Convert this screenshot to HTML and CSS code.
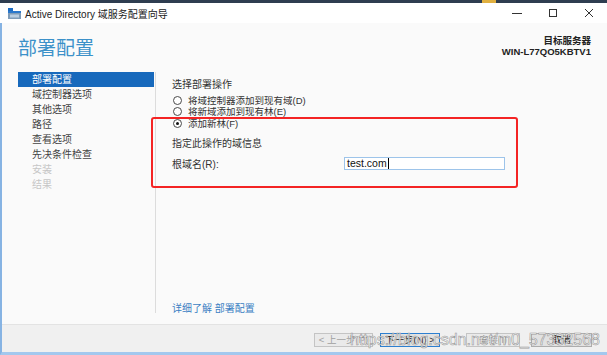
FILE: index.html
```html
<!DOCTYPE html>
<html lang="zh-CN">
	<head>
		<meta charset="UTF-8">
		<meta name="viewport" content="width=device-width, initial-scale=1.0">
		<title>Active Directory 域服务配置向导</title>
		<link rel="stylesheet" href="styles.css">
	</head>
	<body>
		<div class="screen">
			<div class="taskstrip"><span class="taskmark"></span></div>

			<div class="titlebar">
				<svg class="app-icon" width="14" height="11" viewBox="0 0 14 11">
					<rect x="0" y="0" width="5" height="3" fill="#1c6cc4"/>
					<rect x="0" y="3" width="13" height="2" fill="#2a78cc"/>
					<rect x="0" y="5" width="13" height="6" fill="#7d9bb8"/>
					<rect x="2" y="6.5" width="9" height="3" fill="#b9cde0"/>
				</svg>
				<span class="title">Active Directory 域服务配置向导</span>
				<div class="controls">
					<span class="ctl">
						<svg width="10" height="10" viewBox="0 0 10 10"><path d="M0 5.5h10" stroke="#333" stroke-width="1"/></svg>
					</span>
					<span class="ctl">
						<svg width="10" height="10" viewBox="0 0 10 10"><rect x="1.5" y="1.5" width="7" height="7" fill="none" stroke="#333" stroke-width="1"/></svg>
					</span>
					<span class="ctl">
						<svg width="10" height="10" viewBox="0 0 10 10"><path d="M1 1l8 8M9 1l-8 8" stroke="#333" stroke-width="1"/></svg>
					</span>
				</div>
			</div>

			<div class="frame">
				<div class="main">
					<div class="header">
						<h1>部署配置</h1>
						<div class="target">
							<div>目标服务器</div>
							<div class="host">WIN-L77QO5KBTV1</div>
						</div>
					</div>

					<div class="body">
						<ul class="steps">
							<li class="active">部署配置</li>
							<li>域控制器选项</li>
							<li>其他选项</li>
							<li>路径</li>
							<li>查看选项</li>
							<li>先决条件检查</li>
							<li class="disabled">安装</li>
							<li class="disabled">结果</li>
						</ul>
						<div class="divider"></div>

						<div class="pane">
							<div class="caption">选择部署操作</div>
							<div class="radios">
								<div class="radio"><span class="dot"></span>将域控制器添加到现有域(D)</div>
								<div class="radio"><span class="dot"></span>将新域添加到现有林(E)</div>
								<div class="radio checked"><span class="dot"></span>添加新林(F)</div>
							</div>

							<div class="caption section">指定此操作的域信息</div>
							<div class="field">
								<span class="field-label">根域名(R):</span>
								<div class="textbox">test.com<span class="caret"></span></div>
							</div>

							<a class="more" href="#">详细了解 部署配置</a>
						</div>
					</div>
				</div>

				<div class="footer">
					<button class="btn" disabled>&lt; 上一步(P)</button>
					<button class="btn default">下一步(N) &gt;</button>
					<button class="btn install" disabled>安装(I)</button>
					<button class="btn cancel">取消</button>
				</div>
			</div>

			<div class="mark-box"></div>
			<div class="watermark">https://blog.csdn.net/m0_57332568</div>
		</div>
	</body>
</html>
```

FILE: styles.css
```css
body {
    margin: 0;
    background-color: #fafafa;
    font-family: "Liberation Sans", "Noto Sans CJK SC", sans-serif;
    font-size: 10px;
    color: #333333;
}

.screen {
    position: relative;
    width: 607px;
    height: 355px;
    overflow: hidden;
}

.taskstrip {
    height: 3px;
    background-color: #2e3d50;
    display: flex;
}

.taskmark {
    width: 14px;
    margin-left: 482px;
    background-color: #e0b040;
}

/* title bar */

.titlebar {
    height: 20px;
    background-color: #ffffff;
    display: flex;
    align-items: center;
}

.app-icon {
    margin-left: 8px;
    margin-right: 3px;
}

.title {
    color: #222222;
    font-size: 10px;
}

.controls {
    margin-left: auto;
    display: flex;
    height: 100%;
}

.ctl {
    width: 36px;
    display: flex;
    align-items: center;
    justify-content: center;
}

/* window frame */

.frame {
    height: 329px;
    border-left: 2px solid #86b3e3;
    border-bottom: 3px solid #a3c8ee;
    display: flex;
    flex-direction: column;
}

.main {
    flex: 1;
    min-height: 0;
    background-color: #fafafa;
    padding: 13px 16px 0 16px;
    display: flex;
    flex-direction: column;
}

.header {
    display: flex;
    justify-content: space-between;
    align-items: flex-start;
}

h1 {
    margin: 0;
    font-size: 19px;
    line-height: 22px;
    font-weight: normal;
    color: #3c91c9;
    font-family: "Noto Sans CJK SC", sans-serif;
}

.target {
    text-align: right;
    font-weight: bold;
    font-size: 9.5px;
    line-height: 10.5px;
    color: #222222;
}

.body {
    flex: 1;
    min-height: 0;
    margin-top: 14px;
    padding-bottom: 9px;
    display: flex;
}

/* step list */

.steps {
    list-style: none;
    margin: 0;
    padding: 0;
    width: 136px;
}

.steps li {
    height: 15px;
    line-height: 15px;
    padding-left: 14px;
    color: #444444;
}

.steps li.active {
    background-color: #1769bc;
    color: #ffffff;
}

.steps li.disabled {
    color: #c6c6c6;
}

.divider {
    width: 1px;
    margin-left: 1px;
    margin-bottom: 2px;
    background-color: #dcdcdc;
}

/* right pane */

.pane {
    flex: 1;
    padding-left: 16px;
    display: flex;
    flex-direction: column;
}

.caption {
    margin-top: 7px;
    line-height: 12px;
    color: #333333;
}

.caption.section {
    margin-top: 9px;
}

.radios {
    margin-top: 4px;
}

.radio {
    height: 11.3px;
    line-height: 11px;
    font-size: 9.5px;
    display: flex;
    align-items: center;
    color: #333333;
}

.dot {
    width: 7px;
    height: 7px;
    border: 1px solid #4a4a4a;
    border-radius: 50%;
    margin-left: 1px;
    margin-right: 6px;
    display: flex;
    align-items: center;
    justify-content: center;
    background-color: #ffffff;
}

.radio.checked .dot::after {
    content: "";
    width: 3px;
    height: 3px;
    border-radius: 50%;
    background-color: #111111;
}

.field {
    margin-top: 6px;
    display: flex;
    align-items: center;
}

.field-label {
    width: 172px;
}

.textbox {
    width: 155px;
    height: 11px;
    line-height: 11px;
    border: 1px solid #9dc4ea;
    background-color: #ffffff;
    padding: 0 2px;
    font-size: 10.5px;
    color: #111111;
    display: flex;
    align-items: center;
}

.caret {
    width: 1px;
    height: 11px;
    margin-left: 1px;
    background-color: #000000;
}

.more {
    margin-top: auto;
    line-height: 12px;
    color: #3b7fc3;
    text-decoration: none;
}

/* footer buttons */

.footer {
    height: 28px;
    flex-shrink: 0;
    border-top: 1px solid #e3e3e3;
    background-color: #f0f0f0;
    display: flex;
    align-items: flex-start;
    padding-top: 8px;
    box-sizing: border-box;
    padding-left: 312px;
}

.btn {
    width: 59px;
    height: 14px;
    padding: 0;
    border: 1px solid #adadad;
    background-color: #e1e1e1;
    font-family: inherit;
    font-size: 9.5px;
    line-height: 12px;
    color: #222222;
}

.btn:disabled {
    background-color: #eaeaea;
    border-color: #c4c4c4;
    color: #a0a0a0;
}

.btn.default {
    width: 60px;
    margin-left: 7px;
    border-color: #2d7fd0;
}

.btn.install {
    width: 54px;
    margin-left: 26px;
}

.btn.cancel {
    width: 61px;
    margin-left: 11px;
}

/* screenshot annotations */

.mark-box {
    position: absolute;
    left: 151px;
    top: 117px;
    width: 363px;
    height: 67px;
    border: 2px solid #f42424;
    border-radius: 3px;
}

.watermark {
    position: absolute;
    left: 350px;
    top: 330px;
    font-family: "Liberation Sans", sans-serif;
    font-size: 16px;
    line-height: 20px;
    color: rgba(255, 255, 255, 0.85);
    -webkit-text-stroke: 0.6px rgba(110, 110, 110, 0.7);
    white-space: nowrap;
}
```
